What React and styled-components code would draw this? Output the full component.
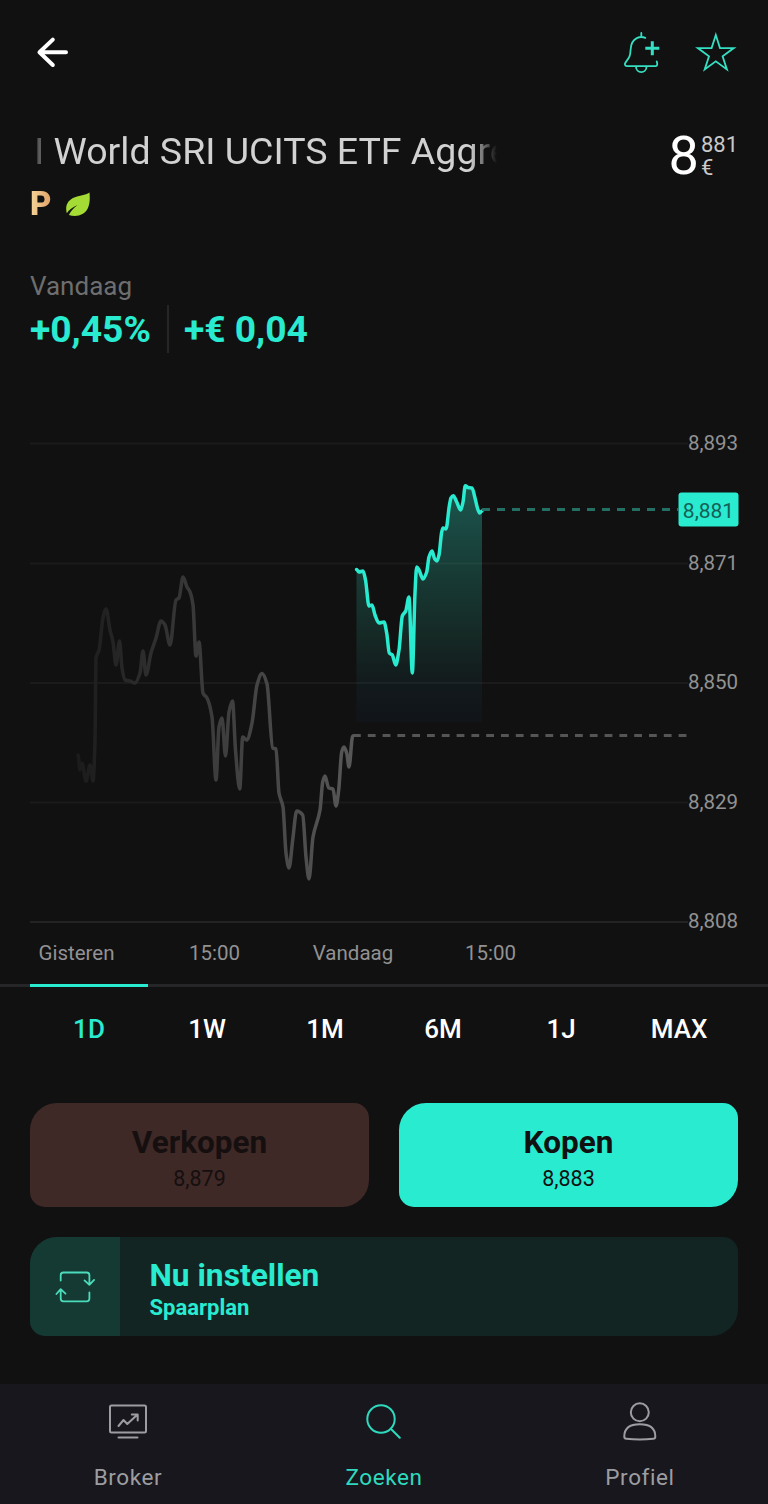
import React from "react"
import styled, { createGlobalStyle } from "styled-components"

const teal = "#29ebd0"
const background = "#111112"

const GlobalStyle = createGlobalStyle`
  * {
    box-sizing: border-box;
  }

  body {
    margin: 0;
    background: ${background};
    font-family: Roboto, "Liberation Sans", sans-serif;
  }

  button {
    border: 0;
    padding: 0;
    background: none;
    font: inherit;
  }

  svg {
    display: block;
    flex-shrink: 0;
  }
`

const Screen = styled.div`
  display: flex;
  flex-direction: column;
  width: 768px;
  height: 1504px;
  background: ${background};
`

const TopBar = styled.header`
  display: flex;
  align-items: center;
  justify-content: space-between;
  height: 103px;
  padding: 0 30px;
`

const Actions = styled.div`
  display: flex;
  gap: 30px;
`

const Heading = styled.div`
  display: flex;
  justify-content: space-between;
  height: 82px;
  padding: 24px 30px 0;
`

const Name = styled.h1`
  width: 500px;
  margin: 0;
  white-space: nowrap;
  color: #d2d2d2;
  font-size: 37.5px;
  font-weight: 400;
  line-height: 48px;
  text-indent: 4px;
  mask-image: linear-gradient(90deg, transparent 0, #000 24px, #000 440px, transparent 467px);
`

const Price = styled.div`
  display: flex;
  gap: 2px;
  color: #fff;
  font-size: 54px;
  line-height: 58px;
`

const PriceSide = styled.div`
  display: flex;
  flex-direction: column;
  padding-top: 6px;
  color: #c9c9c9;
  font-size: 22px;
  line-height: 23px;
`

const Badges = styled.div`
  display: flex;
  align-items: center;
  gap: 13px;
  height: 38px;
  padding: 0 30px;
`

const Premium = styled.span`
  width: 22px;
  background: linear-gradient(90deg, #f6d59b, #e0a063);
  background-clip: text;
  color: transparent;
  font-size: 33px;
  font-weight: 900;
  line-height: 38px;
`

const Performance = styled.section`
  height: 129px;
  padding: 48px 30px 0;
`

const Period = styled.div`
  color: #6e6e6e;
  font-size: 26px;
  line-height: 30px;
`

const Gains = styled.div`
  display: flex;
  align-items: center;
`

const Gain = styled.span`
  color: ${teal};
  font-size: 37.2px;
  font-weight: 700;
  line-height: 56px;

  & + & {
    margin-left: 16px;
    padding-left: 15px;
    border-left: 2px solid #262626;
    line-height: 48px;
  }
`

const AxisText = styled.text`
  fill: ${({ $color }) => $color || "#929292"};
  font-size: ${({ $size }) => $size || 20.5}px;
`

const Ranges = styled.nav`
  display: grid;
  grid-template-columns: repeat(6, 118px);
  height: 88px;
  padding: 0 30px;
  box-shadow: inset 0 3px #262628;
`

const Range = styled.button`
  border-top: 3px solid ${({ $active }) => ($active ? teal : "transparent")};
  color: ${({ $active }) => ($active ? teal : "#fff")};
  font-size: 26px;
  font-weight: 500;
  line-height: 85px;
`

const Orders = styled.div`
  display: flex;
  gap: 30px;
  margin-top: 31px;
  padding: 0 30px;
`

const Order = styled.button`
  display: flex;
  flex: 1;
  flex-direction: column;
  align-items: center;
  height: 104px;
  padding-top: 20px;
  border-radius: 27px 15px;
  background: ${({ $disabled }) => ($disabled ? "#3e2927" : teal)};
  color: ${({ $disabled }) => ($disabled ? "#160f0f" : background)};
`

const OrderLabel = styled.span`
  font-size: 31.5px;
  font-weight: 700;
  line-height: 39px;
`

const OrderPrice = styled.span`
  font-size: 21.5px;
  line-height: 34px;
`

const Plan = styled.button`
  display: flex;
  flex-shrink: 0;
  height: 99px;
  margin: 30px 30px 0;
  overflow: hidden;
  border-radius: 27px 15px;
  background: #122523;
  color: ${teal};
  text-align: left;
`

const PlanIcon = styled.span`
  display: flex;
  align-items: center;
  justify-content: center;
  width: 90px;
  height: 100%;
  padding-bottom: 3px;
  background: #153933;
`

const PlanText = styled.span`
  display: flex;
  flex-direction: column;
  padding: 19px 0 0 29.5px;
  font-weight: 700;
`

const PlanTitle = styled.span`
  font-size: 31.7px;
  line-height: 39px;
`

const PlanSubtitle = styled.span`
  font-size: 22px;
  line-height: 26px;
`

const TabBar = styled.nav`
  display: grid;
  flex-shrink: 0;
  grid-template-columns: repeat(3, 1fr);
  height: 120px;
  margin-top: auto;
  background: #17171d;
`

const Tab = styled.button`
  display: flex;
  flex-direction: column;
  align-items: center;
  gap: 19px;
  padding-top: 16px;
  color: ${({ $active }) => ($active ? "#2fd9bd" : "#9d9da1")};
  font-size: 22.5px;
  line-height: 28px;
  letter-spacing: 0.6px;
`

const Icon = ({ children, ...props }) => (
  <svg
    width="44"
    height="44"
    viewBox="0 0 44 44"
    fill="none"
    stroke="currentColor"
    strokeWidth="2"
    strokeLinecap="round"
    strokeLinejoin="round"
    {...props}
  >
    {children}
  </svg>
)

const BackIcon = () => (
  <Icon color="#fff" strokeWidth="4">
    <path d="M36 22.3H10M22.8 9.6L9.5 22.3L22.8 35" />
  </Icon>
)

const BellIcon = () => (
  <Icon color="#35dfc2" strokeWidth="1.8">
    <path d="M21.3 3v4M25.3 7.8c-2.4-1-5.8-1-8.5.3-5 2.4-6 6.5-6.2 11.7-.3 6.5-1.3 7.8-4.8 12.3-1.5 2-1.2 4 1.3 4h28.6c1.6 0 2-2.1 1-4.7M16 36.5c0 7.5 10.5 7.5 10.5 0" />
    <path d="M32.3 11.2v14M25.3 18.2h14" strokeWidth="3" strokeLinecap="butt" />
  </Icon>
)

const StarIcon = () => (
  <Icon color="#35dfc2" strokeWidth="1.8" strokeLinejoin="miter">
    <path d="M21.8 4.9L26 18.1H39.8L28.6 26.3L32.9 39.4L21.8 31.3L10.7 39.4L15 26.3L3.8 18.1H17.6Z" />
  </Icon>
)

const LeafIcon = () => (
  <svg width="26" height="26" viewBox="0 0 26 26">
    <path
      d="M24.5 1.5C21.5 4 15.5 4.3 10 6.2 2.5 8.8-.2 15 1.8 22.2c2-2.8 5-5.5 10.7-8.2-4.4 3.5-7 6.5-8.6 10 8 2.4 15.5 0 18.8-6.5C25 13 25 7 24.5 1.5z"
      fill="#a4dc35"
    />
  </svg>
)

const RepeatIcon = () => (
  <Icon color="#4bdcbc" strokeWidth="1.8">
    <path d="M7.7 17.5v-5.3q0-2.7 2.7-2.7h23.3q2.7 0 2.7 2.7v9.6M31.5 17.4l4.9 4.5 4.7-5M36.4 29.5v6q0 2.8-2.7 2.8H10.4q-2.7 0-2.7-2.8v-9M3.4 31l4.3-4.8 4.8 4.5" />
  </Icon>
)

const BrokerIcon = () => (
  <Icon>
    <rect x="4" y="5.5" width="36" height="27" rx="1.5" />
    <path d="M12.5 37.5h19M12.5 26l5-6 3.8 4L31.5 14.5M25.8 14.5h5.9v5.9" />
  </Icon>
)

const SearchIcon = () => (
  <Icon>
    <circle cx="19" cy="19" r="13.7" />
    <path d="M28.8 28.8l9 9" />
  </Icon>
)

const ProfileIcon = () => (
  <Icon>
    <ellipse cx="21.8" cy="12.3" rx="9" ry="9" />
    <path d="M6.3 36.5c0-8.5 6-12.2 15.5-12.2s15.5 3.7 15.5 12.2q0 2.2-2 2.2-13.5 1.5-27 0-2 0-2-2.2z" />
  </Icon>
)

const gridLevels = [
  { label: "8,893", y: 443 },
  { label: "8,871", y: 563 },
  { label: "8,850", y: 682.5 },
  { label: "8,829", y: 802 },
  { label: "8,808", y: 921.5 },
]

const times = [
  { label: "Gisteren", x: 76.5 },
  { label: "15:00", x: 214.5 },
  { label: "Vandaag", x: 353 },
  { label: "15:00", x: 490.5 },
]

const yesterday = [
  [78, 755], [80, 770], [82, 763], [86, 781], [90, 765], [93, 781], [95, 740], [96, 658], [99, 650],
  [103, 618], [106, 609], [110, 630], [113, 642], [116, 665], [119.5, 641], [122, 668], [125, 680],
  [130, 681], [135, 683], [140, 673], [143, 651], [146, 675], [151, 653], [156, 638], [161, 621],
  [165, 625], [170, 645], [176, 600], [179, 598], [183, 577], [187, 587], [190, 592], [193, 605],
  [196, 656], [199, 642], [203, 693], [207, 698], [212, 717], [216, 780], [219, 727], [222, 718],
  [225.5, 756], [229, 712], [232.5, 701], [235.5, 750], [239.7, 789], [242.7, 737], [246.7, 740],
  [252, 723], [257, 685], [262, 673.5], [267, 684], [272.7, 748], [276, 749], [279, 793], [283, 807],
  [286, 853], [289, 868], [292.7, 840], [296.7, 811], [302.7, 815], [306, 857], [309, 879],
  [313, 837], [320, 810], [322.7, 782], [325, 776], [328.7, 788], [333, 789], [336, 806],
  [338.7, 790], [341.7, 752], [344, 747], [346.7, 753], [349, 767], [352.7, 736],
]

const today = [
  [356.5, 569.5], [359, 572], [363, 571], [365.5, 580], [369, 606], [372, 605], [375, 615],
  [379, 623], [384, 622], [386.7, 633], [389.3, 653], [392.3, 655], [395.7, 665], [399, 650],
  [402.3, 616], [405.7, 611], [409, 597], [412.3, 673], [415, 593], [416.7, 567], [419, 570],
  [423, 579], [426.7, 572], [429, 557], [432, 551], [434.7, 559], [437, 561], [439, 555],
  [441.7, 532], [443, 528], [446, 529], [449.3, 506], [451, 498], [453.3, 495.7], [456.7, 502],
  [460.7, 510], [463, 502], [465.3, 485.7], [468, 487.5], [472, 488], [475, 498], [477.7, 509],
  [479.7, 513], [482, 511],
]

// horizontal handles in turning points, slope handles elsewhere
const toPath = points => {
  const slopes = points.map(([x, y], i) => {
    const prev = points[i - 1]
    const next = points[i + 1]
    if (!prev || !next || (y - prev[1]) * (next[1] - y) <= 0) return 0
    const before = (y - prev[1]) / (x - prev[0])
    const after = (next[1] - y) / (next[0] - x)
    return (2 * before * after) / (before + after)
  })

  return points.reduce((path, [x, y], i) => {
    if (!i) return `M${x} ${y}`
    const [px, py] = points[i - 1]
    const h = (x - px) / 3
    return `${path}C${px + h} ${py + slopes[i - 1] * h} ${x - h} ${y - slopes[i] * h} ${x} ${y}`
  }, "")
}

const Chart = () => (
  <svg width="768" height="632" viewBox="0 352 768 632">
    <defs>
      <linearGradient id="area" x1="0" y1="485" x2="0" y2="722" gradientUnits="userSpaceOnUse">
        <stop offset="0" stopColor="#1b574e" />
        <stop offset="0.25" stopColor="#19433d" />
        <stop offset="0.65" stopColor="#152824" />
        <stop offset="0.85" stopColor="#12191c" />
        <stop offset="1" stopColor="#111419" />
      </linearGradient>
      <linearGradient id="fade" x1="76" y1="0" x2="353" y2="0" gradientUnits="userSpaceOnUse">
        <stop offset="0" stopColor="#1b1b1b" />
        <stop offset="0.4" stopColor="#373737" />
        <stop offset="1" stopColor="#575757" />
      </linearGradient>
    </defs>
    <path d={`${toPath(today)}V722H356.5Z`} fill="url(#area)" />
    {gridLevels.map(({ label, y }, i) => (
      <path
        key={label}
        d={`M30 ${y + 0.5}H688`}
        stroke="#fff"
        strokeOpacity={i === gridLevels.length - 1 ? 0.08 : 0.045}
        strokeWidth="2"
      />
    ))}
    <g fill="none" strokeLinejoin="round" strokeLinecap="round" strokeWidth="3.5">
      <path d={toPath(yesterday)} stroke="url(#fade)" />
      <path d={toPath(today)} stroke={teal} />
    </g>
    <path d="M353 735.5H688" stroke="#555" strokeWidth="3" strokeDasharray="7.8 7" />
    <path d="M482 509.5H678" stroke="#246f64" strokeWidth="3" strokeDasharray="8 7" />
    {gridLevels.map(({ label, y }) => (
      <AxisText key={label} x="738" y={y + 6.9} textAnchor="end">
        {label}
      </AxisText>
    ))}
    {times.map(({ label, x }) => (
      <AxisText key={x} x={x} y="960" textAnchor="middle">
        {label}
      </AxisText>
    ))}
    <rect x="678.5" y="492.5" width="60" height="34" rx="3" fill={teal} />
    <AxisText x="708.5" y="517.5" textAnchor="middle" $color="#146055" $size={21}>
      8,881
    </AxisText>
  </svg>
)

const ranges = ["1D", "1W", "1M", "6M", "1J", "MAX"]

const App = () => (
  <>
    <GlobalStyle />
    <Screen>
      <TopBar>
        <BackIcon />
        <Actions>
          <BellIcon />
          <StarIcon />
        </Actions>
      </TopBar>
      <Heading>
        <Name>I World SRI UCITS ETF Aggre</Name>
        <Price>
          8
          <PriceSide>
            <span>881</span>
            <span>€</span>
          </PriceSide>
        </Price>
      </Heading>
      <Badges>
        <Premium>P</Premium>
        <LeafIcon />
      </Badges>
      <Performance>
        <Period>Vandaag</Period>
        <Gains>
          <Gain>+0,45%</Gain>
          <Gain>+€ 0,04</Gain>
        </Gains>
      </Performance>
      <Chart />
      <Ranges>
        {ranges.map((range, i) => (
          <Range key={range} $active={!i}>
            {range}
          </Range>
        ))}
      </Ranges>
      <Orders>
        <Order $disabled>
          <OrderLabel>Verkopen</OrderLabel>
          <OrderPrice>8,879</OrderPrice>
        </Order>
        <Order>
          <OrderLabel>Kopen</OrderLabel>
          <OrderPrice>8,883</OrderPrice>
        </Order>
      </Orders>
      <Plan>
        <PlanIcon>
          <RepeatIcon />
        </PlanIcon>
        <PlanText>
          <PlanTitle>Nu instellen</PlanTitle>
          <PlanSubtitle>Spaarplan</PlanSubtitle>
        </PlanText>
      </Plan>
      <TabBar>
        <Tab>
          <BrokerIcon />
          Broker
        </Tab>
        <Tab $active>
          <SearchIcon />
          Zoeken
        </Tab>
        <Tab>
          <ProfileIcon />
          Profiel
        </Tab>
      </TabBar>
    </Screen>
  </>
)

export default App
